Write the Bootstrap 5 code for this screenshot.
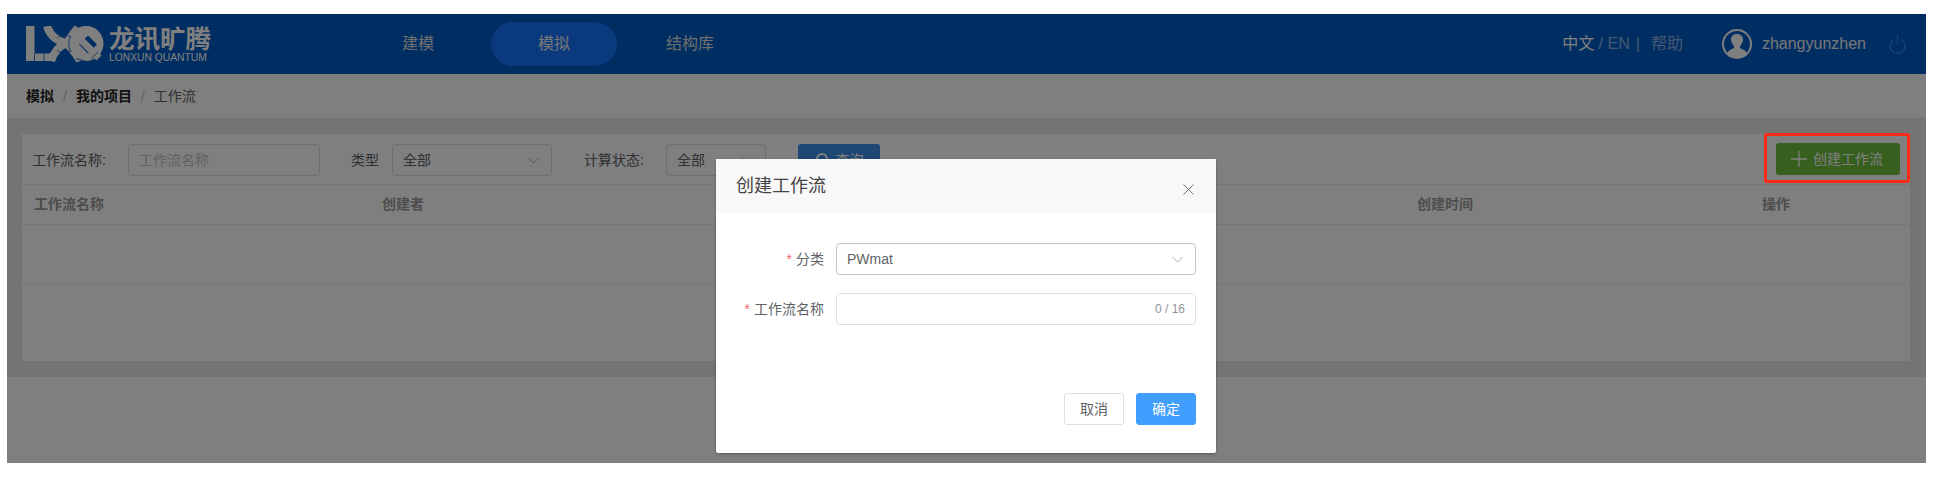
<!DOCTYPE html>
<html lang="zh">
<head>
<meta charset="utf-8">
<title>创建工作流</title>
<link rel="stylesheet" href="https://cdn.jsdelivr.net/npm/bootstrap@5.3.0/dist/css/bootstrap.min.css">
<style>
html,body{height:100%;background:#fff;overflow:hidden}
body{font-family:"Liberation Sans","Noto Sans CJK SC",sans-serif;font-size:14px;color:#606266}
.shell{position:relative;margin:14px 7px;height:449px;overflow:hidden;background:#fff}
.topbar{height:60px;background:#025cc4;color:#fff}
.brand{margin-left:19px;width:185px}
.brand-mark{width:80px;height:36px;flex:none}
.brand-text{margin-left:3px;color:#fff;width:102px}
.brand-cn{font-size:25.5px;line-height:26px;font-weight:700;white-space:nowrap}
.brand-en{font-size:10.300px;line-height:10px;white-space:nowrap;margin-top:1px}
.main-nav{margin-left:144px;gap:10px}
.nav-item-x{width:126px;height:44px;border-radius:22px;font-size:16px;color:#dcdcdc;display:flex;align-items:center;justify-content:center}
.nav-item-x.on{background:#1474fa;color:#eee}
.top-right{margin-left:auto;font-size:16px}
.lang-dim{color:#8db1e2}
.sep-bar{margin:0 11px 0 6px}
.avatar{width:30px;height:30px;margin-left:39px;flex:none}
.uname{font-size:16px;margin-left:10px;color:#eee}
.power{width:17px;height:19px;margin-left:23px;margin-right:20px;flex:none}
.crumbs{height:44px;padding-left:19px;background:#fff;color:#606266}
.crumbs b{color:#222;font-weight:700}
.crumbs i{font-style:normal;color:#c0c4cc;margin:0 9px}
.band{background:#e8e8e8;padding:16px 16px 16px 15px;height:259px}
.panel-x{background:#fff;height:227px}
.filter{height:51px;padding:10px 10px 0 10px;border-bottom:1px solid #ebeef5}
.flabel{line-height:32px;white-space:nowrap;flex:none}
.fl-name{width:76px}
.fl-type{width:29px;margin-left:31px}
.fl-state{width:61px;margin-left:32px}
.fbox{height:32px;border:1px solid #dcdfe6;border-radius:4px;padding:0 12px 0 10px;line-height:30px;display:flex;align-items:center;justify-content:space-between;background:#fff;flex:none}
.fbox svg{width:11px;height:7px}
.ph{color:#c0c4cc}
.w-name{width:192px;margin-left:20px}
.w-type{width:160px;margin-left:12px}
.w-state{width:100px;margin-left:21px}
.query{margin-left:32px;width:82px;height:32px;background:#3f8fe6;color:#fff;border-radius:3px;display:flex;align-items:center;justify-content:center;gap:6px;flex:none}
.query svg{width:15px;height:15px}
.create{margin-left:auto;margin-top:-1px;width:124px;height:32px;background:#6fbe3c;color:#fff;border-radius:3px;display:flex;align-items:center;padding-left:15px;gap:6px;flex:none;white-space:nowrap}
.create svg{width:16px;height:16px;flex:none}
.thead-x{height:40px;border-bottom:1px solid #ebeef5;font-weight:700;color:#9a9a9a;padding-left:12px}
.thead-x span{flex:none}
.c1{width:348px}.c2{width:1035px}.c3{width:345px}
.trow-x{height:60px;border-bottom:1px solid #ebeef5}
.overlay{position:absolute;inset:0;background:rgba(0,0,0,.5);display:flex;justify-content:center;padding:145px 1px 0 0}
.dialog-x{width:500px;height:294px;background:#fff;border-radius:2px;box-shadow:0 1px 3px rgba(0,0,0,.3);display:flex;flex-direction:column;flex:none}
.dialog-head{height:54px;background:#f8f8f8;padding:0 22px 0 20px;flex:none;color:#444}
.dialog-head span{font-size:18px}
.dialog-head svg{width:11px;height:11px;margin-top:6px}
.dialog-body{padding:30px 20px 0 0}
.frow{height:32px;margin-bottom:18px}
.flbl{width:108px;text-align:right;margin-right:12px;flex:none}
.flbl em{color:#f56c6c;font-style:normal;margin-right:4px}
.finput{width:360px;flex:none;padding:0 12px 0 10px}
.finput.sel{border-color:#c0c4cc}
.finput.cnt{padding-right:10px}
.counter{font-size:12px;color:#909399}
.dialog-foot{margin-top:auto;padding:0 20px 28px 0;gap:12px}
.dbtn{width:60px;height:32px;border-radius:3px;border:1px solid #dcdfe6;background:#fff;color:#606266;font-size:14px;padding:0;line-height:30px}
.dbtn.ok{background:#409eff;border-color:#409eff;color:#fff}
.callout{position:absolute;left:1757px;top:119px;width:146px;height:50px;border:3px solid #ff2a1a;border-radius:3px}
</style>
</head>
<body>
<div class="shell">
  <header class="topbar d-flex align-items-center">
    <div class="brand d-flex align-items-center">
      <svg class="brand-mark" viewBox="0 0 80 36" aria-label="LXQ">
        <g fill="#fff">
          <rect x="0" y="0" width="8.500" height="35"/>
          <rect x="0" y="27.500" width="27" height="7.500"/>
          <circle cx="60" cy="17.500" r="17.500"/>
        </g>
        <g fill="none" stroke="#fff" stroke-width="8">
          <path d="M21 0C24 10 32 15 40 17.500"/>
          <path d="M25 35C28 26 33 20 40 17.500"/>
          <path d="M52 2C47 7 44 13 40 17.500"/>
          <path d="M40 17.500C46 21 50 28 54 35"/>
        </g>
        <polygon points="62,9.500 71,18.500 62,27.500 53,18.500" fill="#025cc4"/>
        <path d="M56 15L73 32" stroke="#fff" stroke-width="7"/>
        <g fill="none" stroke="#025cc4" stroke-width=".8">
          <path d="M8.500 27.500V35M18 27.500V35"/>
          <path d="M31 12C35 8 40 8 45 11M31 24C35 28 41 28 45 24M45 10C42 15 42 21 45 26"/>
          <path d="M50 33C53 33 55 34 59 35M72 26L65 33"/>
        </g>
      </svg>
      <div class="brand-text">
        <div class="brand-cn">龙讯旷腾</div>
        <div class="brand-en">LONXUN QUANTUM</div>
      </div>
    </div>
    <nav class="main-nav d-flex">
      <a class="nav-item-x text-decoration-none">建模</a>
      <a class="nav-item-x on text-decoration-none">模拟</a>
      <a class="nav-item-x text-decoration-none">结构库</a>
    </nav>
    <div class="top-right d-flex align-items-center">
      <span>中文</span><span class="lang-dim">&nbsp;/ EN</span><span class="lang-dim sep-bar">|</span><span class="lang-dim">帮助</span>
      <svg class="avatar" viewBox="0 0 30 30" aria-label="用户">
        <circle cx="15" cy="15" r="14" fill="none" stroke="#fff" stroke-width="2"/>
        <path d="M5 25c1-4 5-5 7-6v-2c-2-2-3-4-3-7 0-3 3-5 6-5s6 2 6 5c0 3-1 5-3 7v2c2 1 6 2 7 6-3 2.700-6 4-10 4S8 27.700 5 25z" fill="#fff"/>
      </svg>
      <span class="uname">zhangyunzhen</span>
      <svg class="power" viewBox="0 0 17 19" aria-label="退出" fill="none" stroke="#2a8cf5" stroke-width="1.300">
        <path d="M5 4.200a7.500 7.500 0 1 0 7 0"/><path d="M8.500 0v9"/>
      </svg>
    </div>
  </header>
  <div class="crumbs d-flex align-items-center"><b>模拟</b><i>/</i><b>我的项目</b><i>/</i><span>工作流</span></div>
  <section class="band">
    <div class="panel-x">
      <div class="filter d-flex align-items-start">
        <span class="flabel fl-name">工作流名称:</span>
        <div class="fbox w-name"><span class="ph">工作流名称</span></div>
        <span class="flabel fl-type">类型</span>
        <div class="fbox w-type"><span>全部</span><svg viewBox="0 0 11 7" fill="none" stroke="#a8abb2"><path d="M.5 1l5 5 5-5"/></svg></div>
        <span class="flabel fl-state">计算状态:</span>
        <div class="fbox w-state"><span>全部</span><svg viewBox="0 0 11 7" fill="none" stroke="#a8abb2"><path d="M.5 1l5 5 5-5"/></svg></div>
        <div class="query"><svg viewBox="0 0 15 15" fill="none" stroke="#fff" stroke-width="2"><circle cx="7" cy="6" r="5"/><path d="M2 14c1-2 3-3 5-3s4 1 5 3"/></svg><span>查询</span></div>
        <div class="create"><svg viewBox="0 0 16 16" fill="none" stroke="#fff" stroke-width="1.300"><path d="M8 0v16M0 8h16"/></svg><span>创建工作流</span></div>
      </div>
      <div class="thead-x d-flex align-items-center"><span class="c1">工作流名称</span><span class="c2">创建者</span><span class="c3">创建时间</span><span>操作</span></div>
      <div class="trow-x"></div>
    </div>
  </section>
  <div class="overlay">
    <div class="dialog-x">
      <div class="dialog-head d-flex align-items-center justify-content-between">
        <span>创建工作流</span>
        <svg viewBox="0 0 11 11" fill="none" stroke="#777"><path d="M.5.5l10 10M10.500.5l-10 10"/></svg>
      </div>
      <div class="dialog-body">
        <div class="frow d-flex align-items-center">
          <label class="flbl"><em>*</em>分类</label>
          <div class="fbox finput sel"><span>PWmat</span><svg viewBox="0 0 11 7" fill="none" stroke="#a8abb2"><path d="M.5 1l5 5 5-5"/></svg></div>
        </div>
        <div class="frow d-flex align-items-center">
          <label class="flbl"><em>*</em>工作流名称</label>
          <div class="fbox finput cnt justify-content-end"><span class="counter">0 / 16</span></div>
        </div>
      </div>
      <div class="dialog-foot d-flex justify-content-end">
        <button type="button" class="btn dbtn">取消</button>
        <button type="button" class="btn dbtn ok">确定</button>
      </div>
    </div>
  </div>
  <div class="callout"></div>
</div>
<script src="https://cdn.jsdelivr.net/npm/bootstrap@5.3.0/dist/js/bootstrap.bundle.min.js"></script>
</body>
</html>
